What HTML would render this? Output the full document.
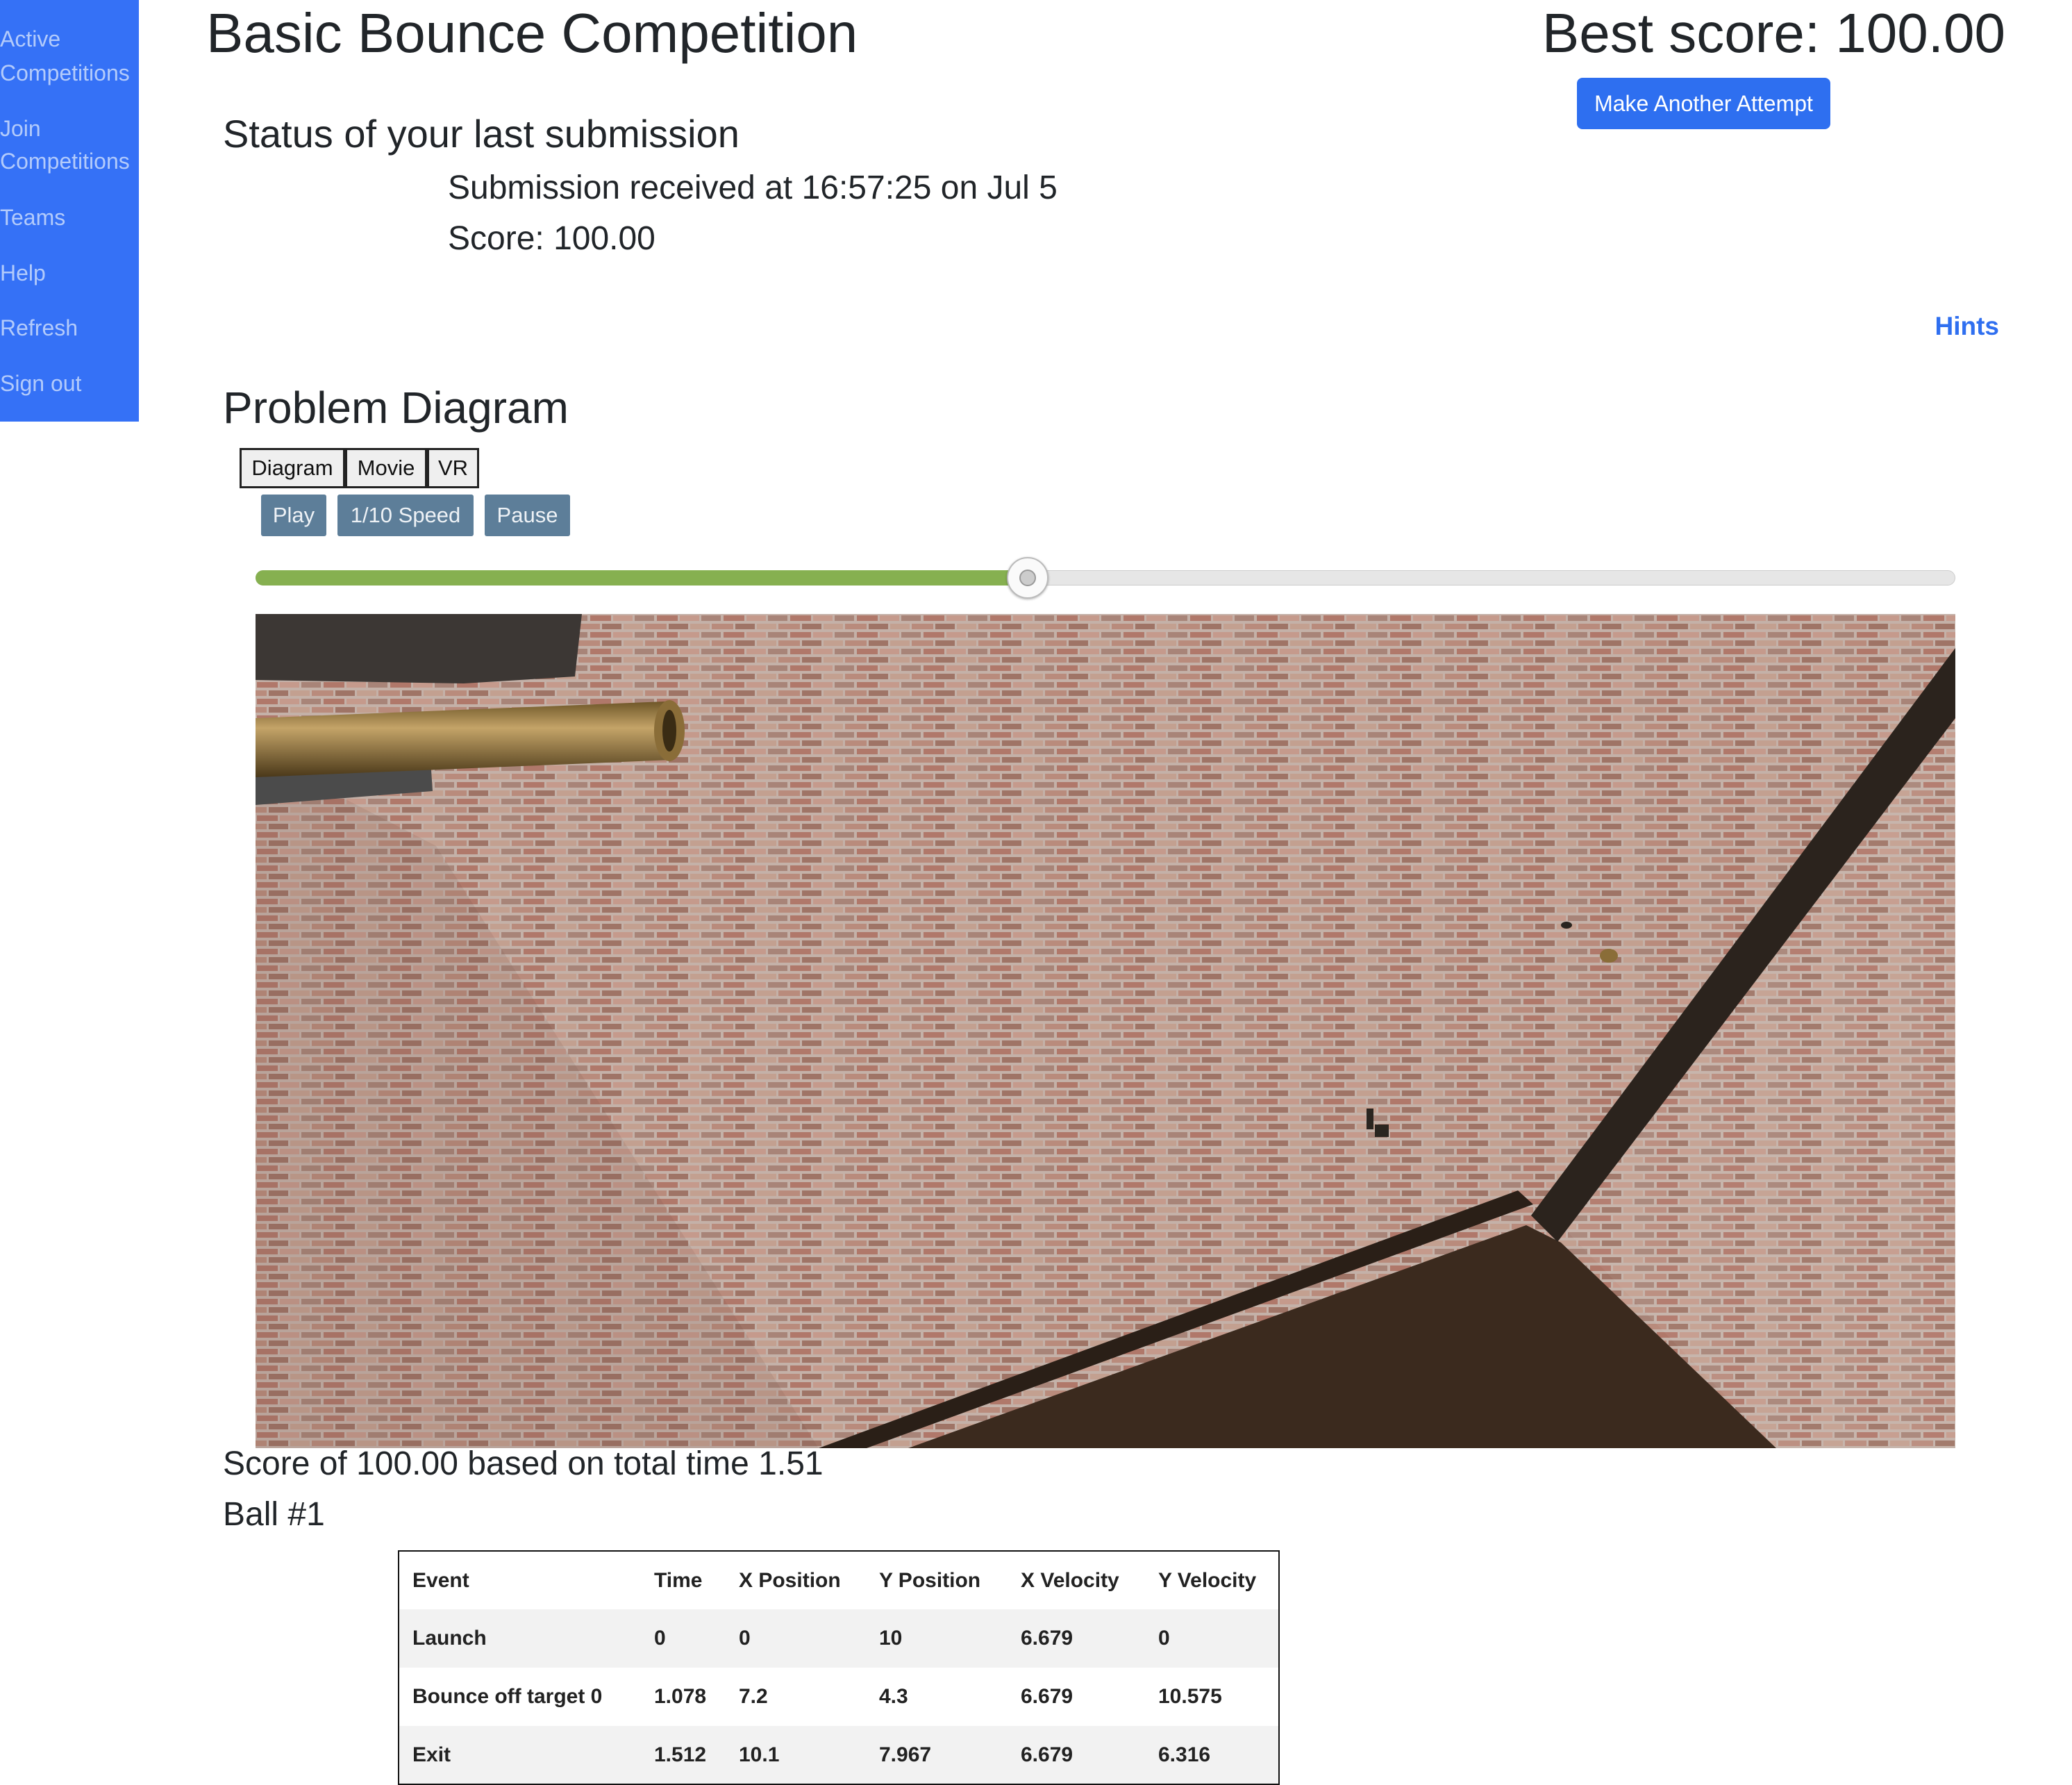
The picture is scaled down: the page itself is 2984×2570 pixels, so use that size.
<!DOCTYPE html>
<html><head><meta charset="utf-8"><style>
*{margin:0;padding:0;box-sizing:border-box}
body{width:2984px;height:2570px;position:relative;background:#fff;font-family:"Liberation Sans",Arial,sans-serif;color:#212529;overflow:hidden}
.a{position:absolute;white-space:nowrap}
#side{position:absolute;left:0;top:0;width:200px;height:607px;background:#3571f6}
#side div{position:absolute;left:0;color:#b3cbfb;font-size:32px;line-height:48px}
.btn{position:absolute;background:#5d7e99;color:#eef2f6;font-size:31px;text-align:center;line-height:60px;height:60px;top:712px;border-radius:3px}
.tab{position:absolute;top:645px;height:58px;border:3px solid #222;background:#efefef;font-size:31px;line-height:52px;text-align:center;color:#111}
table{position:absolute;left:573px;top:2232px;width:1270px;border:2px solid #111;border-collapse:collapse;font-weight:bold;font-size:30px;color:#222}
td{height:84px;padding:0;vertical-align:middle}
tr.g td{background:#f2f2f2}
</style></head><body>
<div id="side">
<div style="top:32px">Active</div><div style="top:81px">Competitions</div>
<div style="top:161px">Join</div><div style="top:208px">Competitions</div>
<div style="top:289px">Teams</div>
<div style="top:369px">Help</div>
<div style="top:448px">Refresh</div>
<div style="top:528px">Sign out</div>
</div>
<div class="a" style="left:297px;top:2px;font-size:80px;line-height:92px">Basic Bounce Competition</div>
<div class="a" style="right:96px;top:2px;font-size:80px;line-height:92px">Best score: 100.00</div>
<div class="a" style="left:2271px;top:112px;width:365px;height:74px;background:#2e6ff0;border-radius:8px;color:#fff;font-size:32px;line-height:74px;text-align:center">Make Another Attempt</div>
<div class="a" style="left:321px;top:160px;font-size:56px;line-height:66px">Status of your last submission</div>
<div class="a" style="left:645px;top:243px;font-size:48px;line-height:56px">Submission received at 16:57:25 on Jul 5</div>
<div class="a" style="left:645px;top:316px;font-size:48px;line-height:56px">Score: 100.00</div>
<div class="a" style="right:105px;top:450px;font-size:37px;line-height:40px;font-weight:bold;color:#2f6ff0">Hints</div>
<div class="a" style="left:321px;top:551px;font-size:64px;line-height:72px">Problem Diagram</div>
<div class="tab" style="left:345px;width:152px">Diagram</div>
<div class="tab" style="left:497px;width:118px">Movie</div>
<div class="tab" style="left:615px;width:75px">VR</div>
<div class="btn" style="left:376px;width:94px">Play</div>
<div class="btn" style="left:486px;width:196px">1/10 Speed</div>
<div class="btn" style="left:698px;width:123px">Pause</div>
<div class="a" style="left:368px;top:821px;width:2448px;height:22px;background:#e6e6e6;border-radius:11px;border:1px solid #ccc"></div>
<div class="a" style="left:368px;top:821px;width:1110px;height:22px;background:#86b050;border-radius:11px 0 0 11px"></div>
<div class="a" style="left:1450px;top:802px;width:60px;height:60px;border-radius:50%;background:#fafafa;border:2px solid #bbb;box-shadow:0 1px 3px rgba(0,0,0,.3)"></div>
<div class="a" style="left:1468px;top:820px;width:24px;height:24px;border-radius:50%;background:#ccc;border:2px solid #999"></div>
<svg class="a" style="left:368px;top:884px" width="2448" height="1201" viewBox="0 0 2448 1201">
<defs>
<pattern id="br" width="96" height="24" patternUnits="userSpaceOnUse">
<rect width="96" height="24" fill="#c4b1a8"/>
<rect x="2" y="2" width="30" height="8" fill="#b0786a"/>
<rect x="35" y="2" width="28" height="8" fill="#c59a8c"/>
<rect x="66" y="2" width="28" height="8" fill="#a88478"/>
<rect x="-14" y="14" width="30" height="8" fill="#b98b7c"/>
<rect x="19" y="14" width="28" height="8" fill="#9f7466"/>
<rect x="50" y="14" width="28" height="8" fill="#c3a090"/>
<rect x="81" y="14" width="30" height="8" fill="#b98b7c"/>
</pattern>
<linearGradient id="brass" x1="0" y1="0" x2="0" y2="1"><stop offset="0" stop-color="#6e5628"/><stop offset=".35" stop-color="#c4a468"/><stop offset="1" stop-color="#4a3819"/></linearGradient>
</defs>
<rect width="2448" height="1201" fill="url(#br)"/>
<polygon points="0,200 260,334 811,1201 0,1201" fill="#6a4a40" opacity=".12"/>
<polygon points="1880,880 2448,150 2448,1201 2190,1201" fill="#fff" opacity=".05"/>
<polygon points="811,1201 1818,830 1840,850 880,1201" fill="#2a1f17"/>
<polygon points="940,1201 1830,880 1880,905 2190,1201" fill="#3b2a1e"/>
<polygon points="1837,866 2448,49 2448,150 1875,904" fill="#2b231d"/>
<polygon points="0,0 470,0 460,90 300,100 0,95" fill="#3c3734"/>
<polygon points="0,200 250,180 255,255 0,275" fill="#4b4b4b"/>
<polygon points="0,150 590,126 600,210 0,235" fill="url(#brass)"/>
<ellipse cx="596" cy="168" rx="22" ry="44" fill="#8a6d38"/>
<ellipse cx="596" cy="168" rx="10" ry="30" fill="#3a2c14"/>
<ellipse cx="1888" cy="448" rx="8" ry="5" fill="#2a2520"/>
<ellipse cx="1949" cy="492" rx="13" ry="10" fill="#8a6d38"/>
<rect x="1600" y="712" width="10" height="30" fill="#2a2520"/>
<rect x="1612" y="735" width="20" height="18" fill="#2a2520"/>
</svg>
<div class="a" style="left:321px;top:2080px;font-size:48px;line-height:56px">Score of 100.00 based on total time 1.51</div>
<div class="a" style="left:321px;top:2153px;font-size:48px;line-height:56px">Ball #1</div>
<table>
<colgroup><col style="width:368px"><col style="width:122px"><col style="width:202px"><col style="width:204px"><col style="width:198px"><col></colgroup>
<tr><td style="padding-left:19px">Event</td><td>Time</td><td>X Position</td><td>Y Position</td><td>X Velocity</td><td>Y Velocity</td></tr>
<tr class="g"><td style="padding-left:19px">Launch</td><td>0</td><td>0</td><td>10</td><td>6.679</td><td>0</td></tr>
<tr><td style="padding-left:19px">Bounce off target 0</td><td>1.078</td><td>7.2</td><td>4.3</td><td>6.679</td><td>10.575</td></tr>
<tr class="g"><td style="padding-left:19px">Exit</td><td>1.512</td><td>10.1</td><td>7.967</td><td>6.679</td><td>6.316</td></tr>
</table>
</body></html>
